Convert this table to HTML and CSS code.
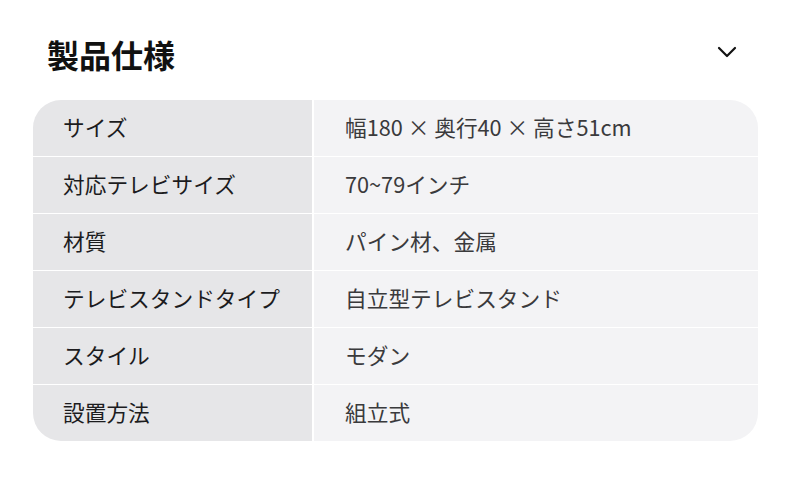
FILE: index.html
```html
<!DOCTYPE html>
<html lang="ja">
<head>
<meta charset="utf-8">
<link rel="stylesheet" href="styles.css">
</head>
<body>
<section class="spec">
  <header class="spec-head">
    <h2 class="spec-title">製品仕様</h2>
    <svg class="chev" width="20" height="12" viewBox="0 0 20 12"><path d="M2 2 L10 10 L18 2" fill="none" stroke="#111" stroke-width="2.2" stroke-linecap="round" stroke-linejoin="round"/></svg>
  </header>
  <div class="table">
    <div class="row"><div class="k">サイズ</div><div class="v">幅180 × 奥行40 × 高さ51cm</div></div>
    <div class="row"><div class="k">対応テレビサイズ</div><div class="v">70~79インチ</div></div>
    <div class="row"><div class="k">材質</div><div class="v">パイン材、金属</div></div>
    <div class="row"><div class="k">テレビスタンドタイプ</div><div class="v">自立型テレビスタンド</div></div>
    <div class="row"><div class="k">スタイル</div><div class="v">モダン</div></div>
    <div class="row"><div class="k">設置方法</div><div class="v">組立式</div></div>
  </div>
</section>
</body>
</html>
```
FILE: styles.css
```css
html, body { margin: 0; padding: 0; background: #fff; }
body { font-family: "Noto Sans CJK JP", "Noto Sans", sans-serif; color: #222; }
.spec { padding: 0 32px 0 33px; }
.spec-head { display: flex; align-items: center; justify-content: space-between; height: 100px; padding-left: 14px; padding-right: 21px; }
.spec-title { margin: 0; margin-top: 8px; font-size: 32px; font-weight: 700; color: #111; line-height: 1; }
.chev { display: block; margin-top: 4px; }
.table { display: flex; flex-direction: column; gap: 1px; border-radius: 28px; overflow: hidden; background: #fff; }
.row { display: grid; grid-template-columns: 279px 1fr; column-gap: 2px; height: 56px; }
.k, .v { display: flex; align-items: center; font-size: 21.7px; padding-bottom: 3px; box-sizing: border-box; }
.k { background: #e6e6e8; padding-left: 30px; color: #1c1c1e; }
.v { background: #f3f3f5; padding-left: 31px; color: #3a3a3c; }
```
